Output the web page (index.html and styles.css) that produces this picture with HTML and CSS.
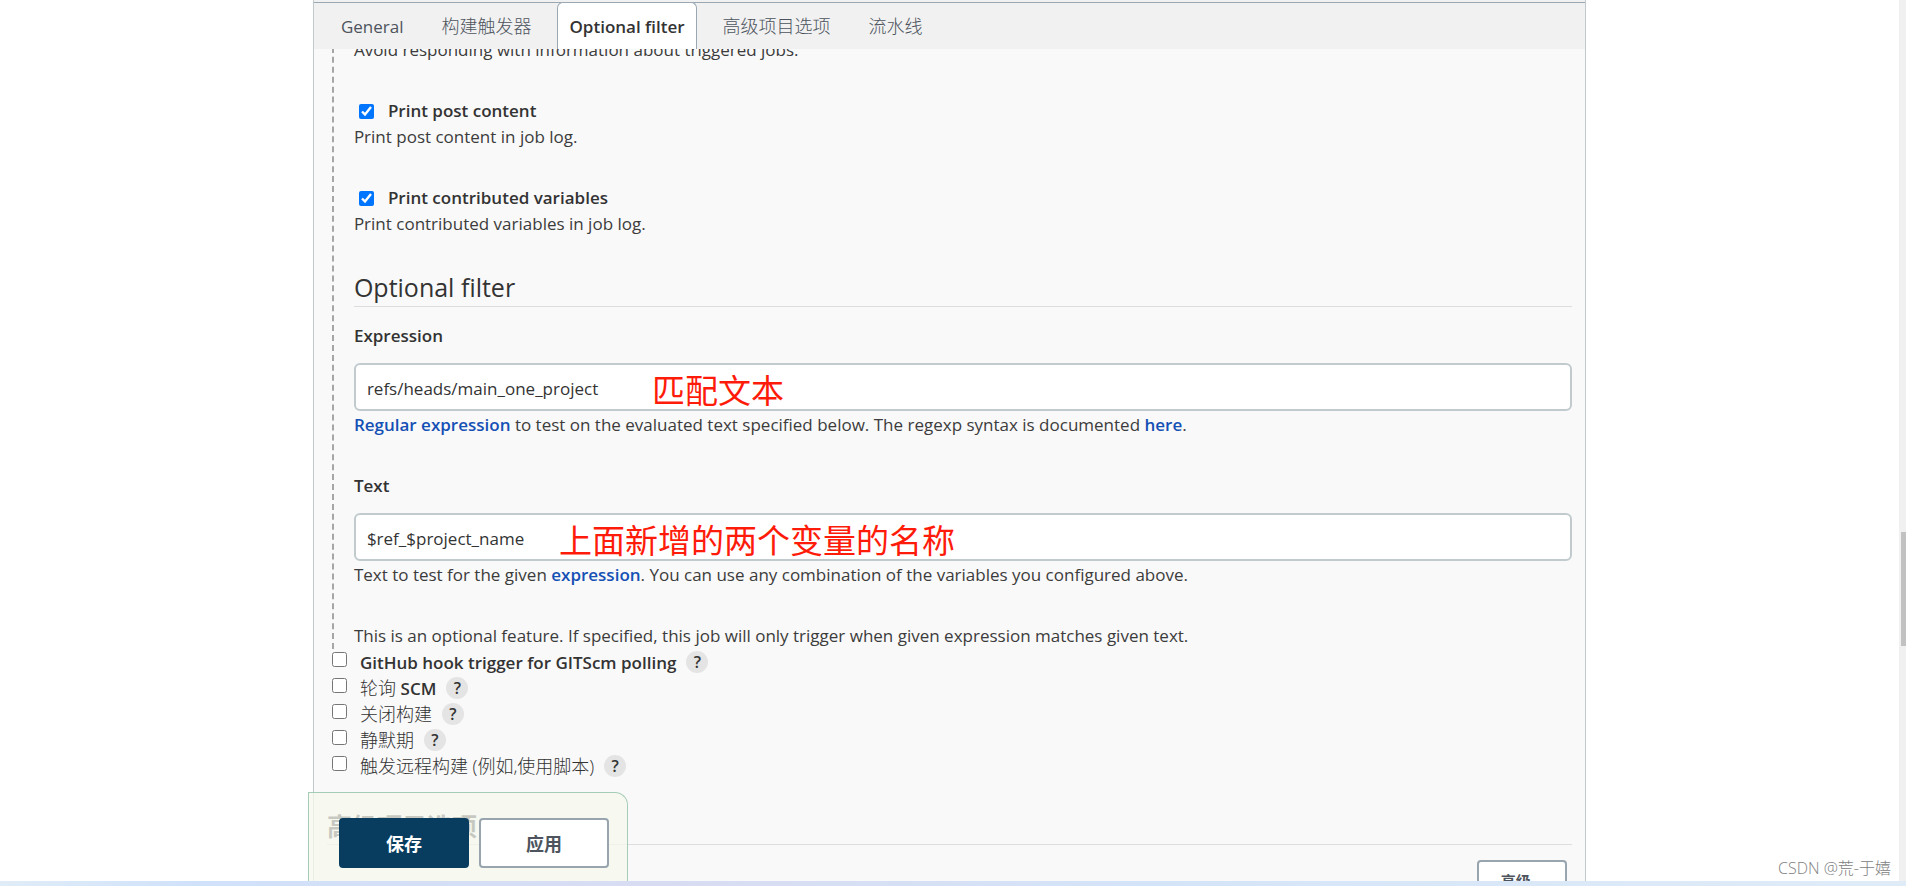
FILE: index.html
```
<!DOCTYPE html>
<html lang="zh-CN">
<head>
<meta charset="UTF-8">
<meta name="viewport" content="width=device-width, initial-scale=1.0">
<title>Optional filter</title>
<link rel="stylesheet" href="styles.css">
</head>
<body>
<div class="page">
  <main class="panel">
    <nav class="tabs">
      <a class="tab" href="#general">General</a>
      <a class="tab zh" href="#triggers">构建触发器</a>
      <a class="tab active" href="#filter">Optional filter</a>
      <a class="tab zh" href="#advanced">高级项目选项</a>
      <a class="tab zh" href="#pipeline">流水线</a>
    </nav>

    <form class="config">
      <div class="group">
        <p class="help first">Avoid responding with information about triggered jobs.</p>

        <div class="entry">
          <div class="check">
            <input type="checkbox" id="printPost" checked>
            <label for="printPost">Print post content</label>
          </div>
          <p class="help">Print post content in job log.</p>
        </div>

        <div class="entry">
          <div class="check">
            <input type="checkbox" id="printVars" checked>
            <label for="printVars">Print contributed variables</label>
          </div>
          <p class="help">Print contributed variables in job log.</p>
        </div>

        <h2 class="title" id="filter">Optional filter</h2>

        <div class="field">
          <label for="expression">Expression</label>
          <div class="control">
            <input type="text" id="expression" value="refs/heads/main_one_project">
            <span class="note note-expression">匹配文本</span>
          </div>
          <p class="help"><a href="#regexp">Regular expression</a> to test on the evaluated text specified below. The regexp syntax is documented <a href="#docs">here</a>.</p>
        </div>

        <div class="field">
          <label for="text">Text</label>
          <div class="control">
            <input type="text" id="text" value="$ref_$project_name">
            <span class="note note-text">上面新增的两个变量的名称</span>
          </div>
          <p class="help">Text to test for the given <a href="#expression">expression</a>. You can use any combination of the variables you configured above.</p>
        </div>

        <p class="help last">This is an optional feature. If specified, this job will only trigger when given expression matches given text.</p>
      </div>

      <div class="triggers">
        <div class="trigger">
          <input type="checkbox" id="github">
          <label for="github"><b>GitHub hook trigger for GITScm polling</b></label>
          <button type="button" class="hint">?</button>
        </div>
        <div class="trigger">
          <input type="checkbox" id="scm">
          <label for="scm">轮询 <b>SCM</b></label>
          <button type="button" class="hint">?</button>
        </div>
        <div class="trigger">
          <input type="checkbox" id="disable">
          <label for="disable">关闭构建</label>
          <button type="button" class="hint">?</button>
        </div>
        <div class="trigger">
          <input type="checkbox" id="quiet">
          <label for="quiet">静默期</label>
          <button type="button" class="hint">?</button>
        </div>
        <div class="trigger">
          <input type="checkbox" id="remote">
          <label for="remote">触发远程构建 (例如,使用脚本)</label>
          <button type="button" class="hint">?</button>
        </div>
      </div>

      <section class="advanced">
        <h2 class="section-title" id="advanced">高级项目选项</h2>
        <button type="button" class="btn btn-small">高级...</button>
      </section>
    </form>

    <div class="actions">
      <button type="submit" class="btn primary">保存</button>
      <button type="button" class="btn">应用</button>
    </div>
  </main>

  <div class="scrollbar"><div class="thumb"></div></div>
  <span class="watermark">CSDN @荒-于嬉</span>
</div>
<div class="taskbar"></div>
</body>
</html>
```

FILE: styles.css
```
* {
  box-sizing: border-box;
}

body {
  margin: 0;
  height: 100vh;
  display: flex;
  flex-direction: column;
  overflow: hidden;
  font-family: "Open Sans", "Noto Sans CJK SC", sans-serif;
  font-size: 17px;
  line-height: 26px;
  color: #3c3c3c;
  background-color: #fff;
}

h2,
p {
  margin: 0;
}

b,
label {
  font-weight: 600;
  color: #333;
}

a {
  color: #1550b5;
  font-weight: 600;
  text-decoration: none;
}

input,
button {
  margin: 0;
  font-family: inherit;
  font-size: 17px;
  color: #333;
}

input[type="checkbox"] {
  width: 15px;
  height: 15px;
}

.page {
  position: relative;
  flex: 1;
  min-height: 0;
  display: flex;
}

.panel {
  position: relative;
  width: 66.8%;
  margin: 0 auto;
  border: 1px solid #bfcacd;
  border-width: 0 1px;
  background-color: #f9f9f9;
}

.tabs {
  position: relative;
  z-index: 1;
  display: flex;
  gap: 14px;
  height: 49px;
  padding: 2px 15px 0;
  background: linear-gradient(#9aa8b3, #9aa8b3) 0 2px / 100% 1px no-repeat #f1f1f1;
}

.tab {
  padding: 11px 11px 0;
  border: 1px solid transparent;
  border-bottom: none;
  border-radius: 6px 6px 0 0;
  color: #4d545d;
  font-weight: 400;
}

.tab.zh {
  padding-top: 10px;
  font-size: 18px;
  font-weight: 300;
}

.tab.active {
  border-color: #9aa8b3;
  background-color: #fff;
  color: #333;
  font-weight: 600;
}

.config {
  padding: 0 13px 0 18px;
}

.group {
  padding-left: 20px;
  border-left: 2px dashed #a6a6a6;
}

.help.first {
  margin-top: -12px;
}

.entry,
.field + .field,
.help.last {
  margin-top: 35px;
}

.check {
  display: flex;
  align-items: center;
  gap: 14px;
  padding-left: 5px;
}

.title {
  margin: 33px 0 16px;
  padding-bottom: 2px;
  border-bottom: 1px solid #ddd;
  font-size: 25px;
  line-height: 34px;
  font-weight: 500;
  color: #333;
}

.control {
  position: relative;
  margin-top: 14px;
}

.control input {
  display: block;
  width: 100%;
  height: 48px;
  padding: 2px 11px 0;
  border: 2px solid #c1cbce;
  border-radius: 6px;
  background-color: #fff;
}

.control + .help {
  margin-top: 1px;
}

/* red hand-added remarks over the fields */
.note {
  position: absolute;
  top: 4px;
  font-size: 33px;
  line-height: 48px;
  color: #ff1b0a;
  pointer-events: none;
}

.note-expression {
  left: 298px;
}

.note-text {
  left: 205px;
}

.trigger {
  display: flex;
  align-items: center;
  height: 26px;
}

.trigger input {
  margin: 0 13px 5px 0;
}

.trigger label {
  font-size: 18px;
  font-weight: 300;
}

.trigger b {
  font-size: 17px;
}

.hint {
  width: 22px;
  height: 22px;
  margin-left: 10px;
  padding: 0;
  border: none;
  border-radius: 50%;
  background-color: #e4e4e4;
  font-size: 16px;
  line-height: 22px;
  font-weight: 600;
}

.advanced {
  display: flex;
  flex-direction: column;
  align-items: flex-end;
  margin-top: 29px;
}

.section-title {
  align-self: stretch;
  margin: 0 0 15px -5px;
  border-bottom: 1px solid #ddd;
  font-size: 25px;
  line-height: 36px;
}

.btn {
  flex: none;
  width: 130px;
  height: 50px;
  border: 2px solid #98a5af;
  border-radius: 4px;
  background-color: #fff;
  color: #4d545d;
  font-size: 18px;
  font-weight: 700;
}

.btn.primary {
  border-color: #083d5f;
  background-color: #083d5f;
  color: #fff;
}

.btn-small {
  width: 90px;
  height: 40px;
  margin-right: 5px;
  font-size: 15px;
}

.actions {
  position: absolute;
  left: -6px;
  bottom: 0;
  display: flex;
  gap: 10px;
  width: 320px;
  height: 89px;
  padding: 25px 0 0 30px;
  border: 1px solid #a5ccb8;
  border-bottom: none;
  border-radius: 0 13px 0 0;
  background-color: rgba(246, 248, 238, 0.75);
}

.scrollbar {
  width: 7px;
  padding: 532px 0 0 2px;
  background-color: #f0f0f0;
}

.thumb {
  height: 114px;
  background-color: #c1c1c1;
}

.watermark {
  position: absolute;
  right: 15px;
  bottom: 0;
  font-size: 16px;
  font-weight: 300;
  color: #808080;
}

.taskbar {
  position: relative;
  height: 5px;
  background: linear-gradient(90deg, #e0edf8, #d0e2fa 10%, #d8dcf2 35%, #d4e4f8 60%, #dfecf8);
}
```
